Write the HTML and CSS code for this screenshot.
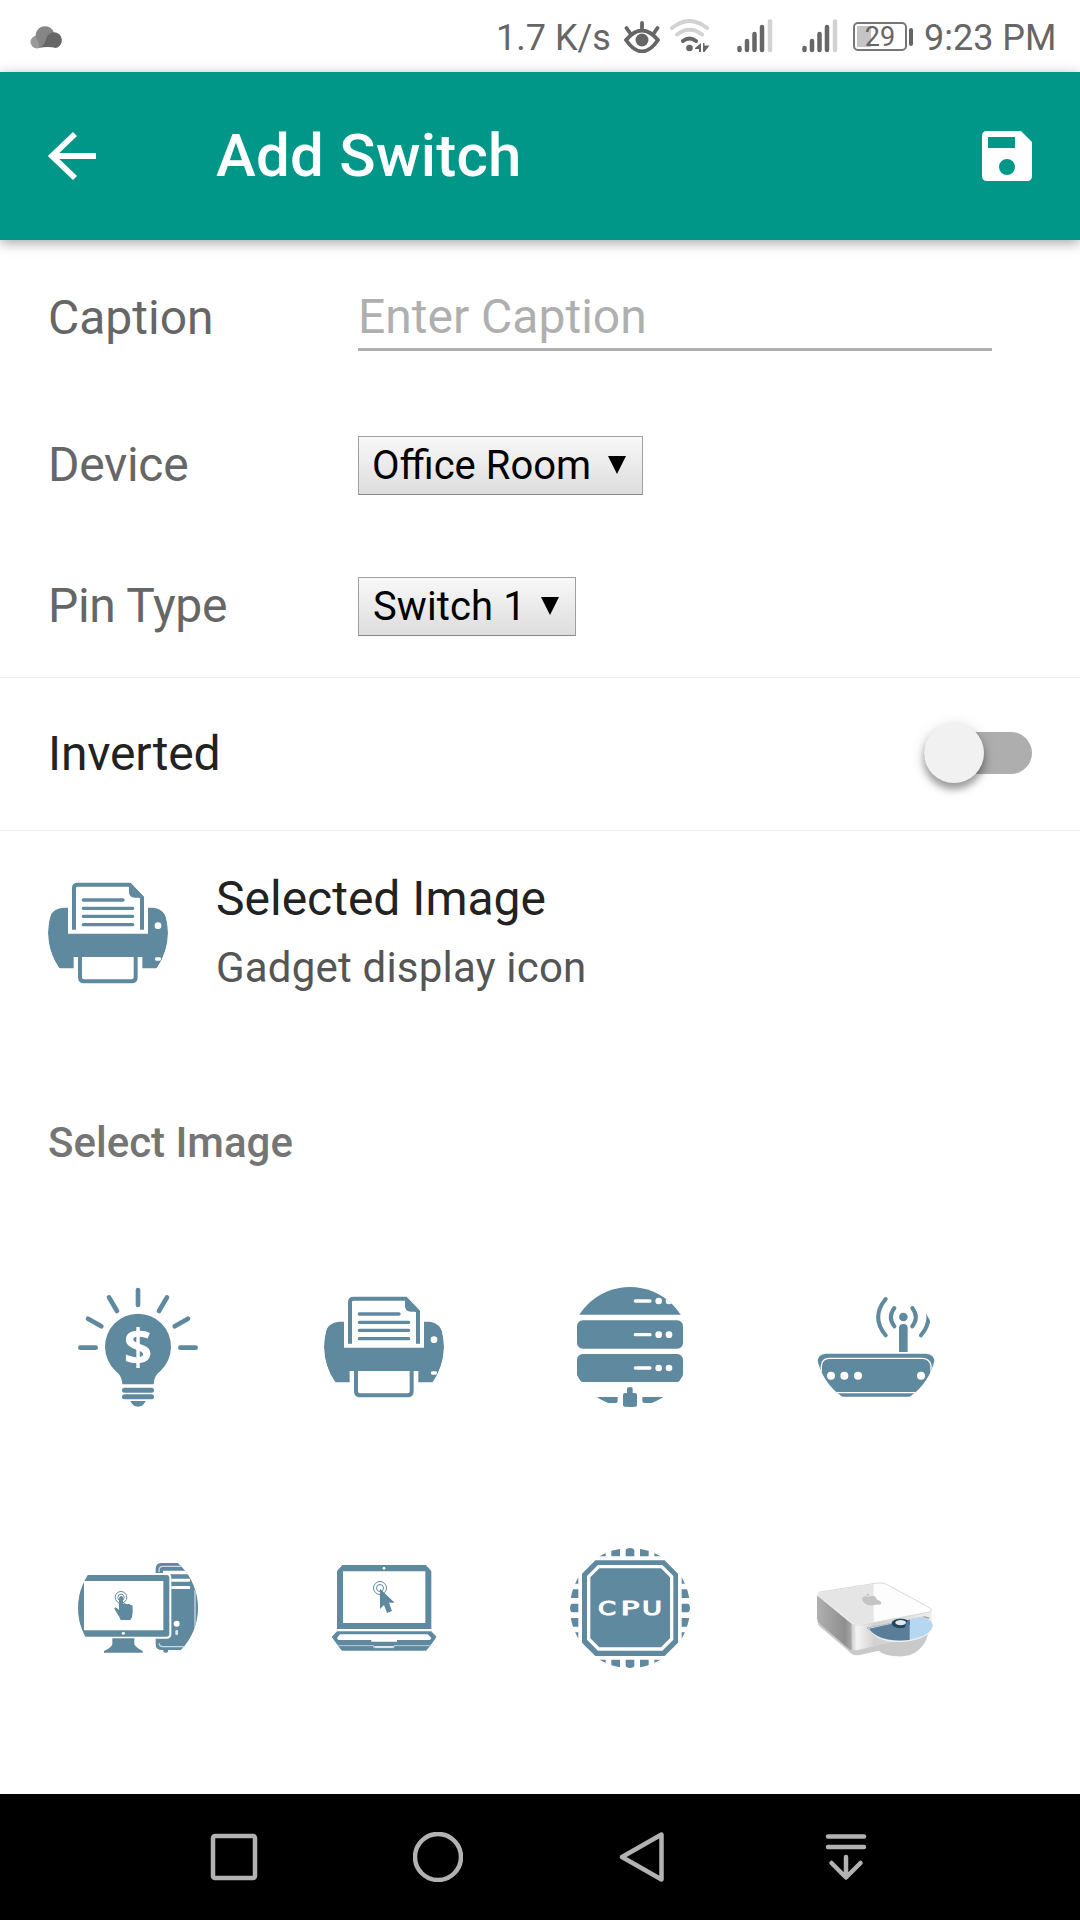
FILE: index.html
```html
<!DOCTYPE html>
<html lang="en">
<head>
<meta charset="utf-8">
<title>Add Switch</title>
<link rel="stylesheet" href="styles.css">
</head>
<body>
<svg class="defs" aria-hidden="true">
  <symbol id="printer" viewBox="42 51 360 360">
    <path d="M102 155V233H342V155H356C377 157 390 167 396 184Q416 262 369 337H325V303H119V337H75Q28 265 48 182C54 166 70 155 90 155Z"/>
    <path class="line12" d="M120 221V96Q120 86 131 86H287L324 125V221"/>
    <path d="M285 84V108Q285 125 303 125H328V122L290 82Z"/>
    <path class="line10" d="M148 132H267M148 157H296M148 181H296M148 206H296"/>
    <path class="line12" d="M138 300V364Q138 376 150 376H293Q305 376 305 364V300"/>
    <circle class="white" cx="372" cy="209" r="10"/>
    <rect class="white" x="363" y="304" width="18" height="10" rx="4"/>
  </symbol>
</svg>
<div class="screen">
  <div class="status">
    <svg class="cloud" viewBox="0 0 34 24"><circle cx="7" cy="17" r="6.5" fill="#999"/><path d="M6 13A9 9 0 0 1 24 8C19 8 17 13 15 17S12 22 9 22Q9 16 6 13Z" fill="#868686"/><path d="M9 23Q13 22 16 14A8 8 0 1 1 26 23Q18 21 9 23Z" fill="#666"/></svg>
    <span class="rate">1.7 K/s</span>
    <svg class="eye" viewBox="0 0 36 32"><path d="M2 19Q18 0 34 19Q18 42 2 19ZM18 9V2M6 12L2.500 7M30 12L33.500 7" fill="none" stroke="#666" stroke-width="3.8" stroke-linecap="round"/><circle cx="18" cy="19" r="6.5" fill="#666"/></svg>
    <svg class="wifi" viewBox="0 0 40 33"><g fill="none" stroke-width="4" stroke-linecap="round"><path d="M2 9Q19.500 -5 37 9M7 15.500Q19.500 6 32 15.500" stroke="#d2d2d2"/><path d="M13 22Q19.500 17 26 22" stroke="#666"/></g><g fill="#666"><circle cx="19.500" cy="29" r="3.300"/><path d="M25 29L31 24V33H29V30H25ZM33 24H34.500V26.500H39.500L34.500 33H33Z"/></g></svg>
    <svg class="signal" viewBox="0 0 36 34"><path d="M2.500 29V31M10 22V31M17.500 15V31M25 8V31" class="bars"/><path d="M33 2.500V31" class="bars faint"/></svg>
    <svg class="signal second" viewBox="0 0 36 34"><path d="M2.500 29V31M10 22V31M17.500 15V31M25 8V31" class="bars"/><path d="M33 2.500V31" class="bars faint"/></svg>
    <span class="battery">29</span><span class="nub"></span>
    <span class="time">9:23 PM</span>
  </div>

  <header class="appbar">
    <svg class="back" viewBox="0 0 48 50"><path d="M27 3L4 25L27 47M4 25H48" fill="none" stroke="#fff" stroke-width="5.800"/></svg>
    <h1 class="title">Add Switch</h1>
    <svg class="save" viewBox="0 0 50 50"><path fill="#fff" fill-rule="evenodd" d="M5 0H39L50 11V45Q50 50 45 50H5Q0 50 0 45V5Q0 0 5 0ZM6 6V17H33V6ZM25 28A8 8 0 1 0 25 44A8 8 0 1 0 25 28Z"/></svg>
  </header>

  <main class="content">
    <div class="row caption"><label class="label">Caption</label><div class="input">Enter Caption</div></div>
    <div class="row"><label class="label tight">Device</label><div class="select">Office Room<svg class="caret" viewBox="0 0 18 18"><path d="M0 0H18L9 18Z"/></svg></div></div>
    <div class="row"><label class="label tight">Pin Type</label><div class="select pin">Switch 1<svg class="caret" viewBox="0 0 18 18"><path d="M0 0H18L9 18Z"/></svg></div></div>
    <div class="row inverted"><span>Inverted</span><div class="toggle"><div class="thumb"></div></div></div>
    <div class="selected">
      <svg class="icon"><use href="#printer"/></svg>
      <div class="texts"><h2 class="name">Selected Image</h2><p class="note">Gadget display icon</p></div>
    </div>
    <h3 class="heading">Select Image</h3>
    <div class="gallery">
      <svg class="icon" viewBox="54 51 360 360">
        <path class="line14" d="M234 60V105M147 82L171 123M321 82L297 123M84 146L124 169M384 146L344 169M61 233H107M361 233H407"/>
        <path d="M187 343Q187 318 166 302A99 99 0 1 1 302 302Q281 318 281 343Z"/>
        <rect x="186" y="353" width="96" height="15" rx="7.500"/><rect x="186" y="373" width="96" height="15" rx="7.500"/>
        <path d="M211 393H257Q250 410 234 410T211 393Z"/>
        <text class="dollar" x="234" y="284">$</text>
      </svg>
      <svg class="icon"><use href="#printer"/></svg>
      <svg class="icon" viewBox="30 51 360 360">
        <path d="M51 51H369V134H51Z"/><rect x="51" y="151" width="318" height="85" rx="17"/><rect x="51" y="252" width="318" height="84" rx="17"/>
        <path d="M51 381H173V393Q173 399 167 399H51ZM369 381H247V393Q247 399 253 399H369ZM201 369V356Q201 351 210 351T218 356V369H225Q231 369 231 375V405Q231 411 225 411H196Q189 411 189 405V375Q189 369 195 369Z"/>
        <path class="line10 on-dark" d="M226 93H270M226 194H270M226 294H270"/>
        <g class="white"><circle cx="296" cy="93" r="10"/><circle cx="327" cy="93" r="10"/><circle cx="296" cy="194" r="10"/><circle cx="327" cy="194" r="10"/><circle cx="296" cy="294" r="10"/><circle cx="327" cy="294" r="10"/></g>
      </svg>
      <svg class="icon" viewBox="48 51 360 360">
        <path d="M52 380V275Q54 252 78 251H378Q402 253 404 275V380Z"/>
        <path d="M64 385V288Q66 265 88 265H368Q390 266 393 288V385M60 368H400" fill="none" stroke="#fff" stroke-width="4"/>
        <path class="line12" d="M257 87Q212 142 257 196M283 114Q262 142 283 169M337 114Q358 142 337 169M363 87Q408 142 363 196"/>
        <path class="white" d="M355 75H378V150L355 110Z"/>
        <circle cx="310" cy="141" r="13"/><path d="M297 246V174Q297 162 310 162T323 174V246Z"/>
        <g class="white"><circle cx="93" cy="317" r="12"/><circle cx="133" cy="317" r="12"/><circle cx="174" cy="317" r="12"/><circle cx="363" cy="317" r="12"/></g>
      </svg>
      <svg class="icon" viewBox="54 54 360 360">
        <path d="M303 99H414V360H305Q287 360 287 342V117Q287 99 303 99Z"/>
        <path d="M298 340Q298 350 308 350H385M297 127V122Q297 109 309 109H380M405 180V300" fill="none" stroke="#cbd9e1" stroke-width="4"/>
        <path d="M309 128V122H410V133H325ZM334 146H389Q393 151 389 155H334ZM334 168H389Q393 173 389 177H334Z" class="white"/>
        <rect x="310" y="356" width="14" height="12" rx="5"/><circle class="white" cx="350" cy="281" r="9"/><rect x="346" y="300" width="8" height="15" rx="3" fill="#dce6eb"/>
        <path d="M40 129H320Q334 129 334 143V311Q334 326 320 326H40Z" class="white"/>
        <path fill-rule="evenodd" d="M40 135H319Q328 135 328 144V311Q328 320 319 320H40ZM72 153V301H310V153Z"/>
        <circle class="white" cx="190" cy="310" r="4.500"/>
        <path d="M157 325H223V343Q227 352 248 363V368H132V363Q155 352 157 343Z"/>
        <g class="rings"><circle cx="183" cy="202" r="17.500"/><circle cx="183" cy="202" r="9.500"/></g>
        <path d="M177 207Q178 198 184 198T189 207V221Q195 218 201 223Q208 220 212 225Q218 224 218 230V247Q218 261 211 270H182Q178 258 170 248L163 236Q163 232 169 233L177 240Z"/>
      </svg>
      <svg class="icon" viewBox="792 54 360 360">
        <path fill-rule="evenodd" d="M847 105H1099L1114 122V297H831V122ZM849 124V279H1096V124Z"/><circle class="white" cx="972" cy="115" r="4"/>
        <path d="M831 304H1114L1130 321L1100 362H845L815 321Z"/>
        <path class="white" d="M840 313H1103L1114 324L1110 330H1011V335H934V330H835L831 324Z"/>
        <path d="M835 347H941V353H1002V347H1110" fill="none" stroke="#b9cdd6" stroke-width="3"/><path d="M942 348H1002L998 354H946Z" fill="#dce6eb"/>
        <g class="rings"><circle cx="960" cy="174" r="19.500"/><circle cx="960" cy="174" r="10.500"/></g>
        <path d="M960 176L1004 218H987L996 243L981 249L972 225L960 237Z"/>
      </svg>
      <svg class="icon" viewBox="30 54 360 360">
        <path d="M106 91H314L354 131V338L314 378H106L66 338V131Z"/>
        <path d="M116 110H305L335 140V327L305 357H116L86 327V140Z" fill="none" stroke="#fff" stroke-width="10"/>
        <g id="pins"><path d="M197 79V62Q197 54 210 54T223 62V79ZM154 79V54H180V79ZM240 79V54H266V79ZM110 79V54H137V79ZM283 79V54H310V79Z"/><path d="M197 389V406Q197 414 210 414T223 406V389ZM154 389V414H180V389ZM240 389V414H266V389ZM110 389V414H137V389ZM283 389V414H310V389Z"/></g>
        <use href="#pins" transform="rotate(90 210 234)"/>
        <text class="cpu" y="256"><tspan x="114" textLength="54" lengthAdjust="spacingAndGlyphs">C</tspan><tspan x="182" textLength="56" lengthAdjust="spacingAndGlyphs">P</tspan><tspan x="246" textLength="60" lengthAdjust="spacingAndGlyphs">U</tspan></text>
      </svg>
      <svg class="icon" viewBox="48 -36 360 360">
        <defs>
          <linearGradient id="side" x1="0" x2="1"><stop offset="0" stop-color="#b0b0b0"/><stop offset=".8" stop-color="#8e8e8e"/><stop offset="1" stop-color="#aaa"/></linearGradient>
          <linearGradient id="front" x1="0" x2="1"><stop offset="0" stop-color="#c9c9c9"/><stop offset=".07" stop-color="#f4f4f4"/><stop offset=".3" stop-color="#d0d0d0"/><stop offset="1" stop-color="#eee"/></linearGradient>
        </defs>
        <path d="M50 180L155 268L240 250L395 190L375 250Q345 289 310 289Q255 291 236 272L180 285Q165 287 155 281L53 194Z" fill="#c9c9c9"/>
        <path d="M51 106L156 190V270Q150 270 146 266L56 188Q51 183 51 175Z" fill="url(#side)"/>
        <path d="M154 194L395 152V205Q395 218 380 222L174 270Q157 274 155 260Z" fill="url(#front)"/>
        <path d="M60 96L232 69Q248 67 260 73L390 144Q400 151 388 156L190 194Q165 198 154 190L55 108Q48 100 60 96Z" fill="#fdfdfd" stroke="#d8d8d8" stroke-width="3"/>
        <path d="M60 97L221 72V187L190 192Q167 196 156 188L57 108Q51 100 60 97Z" fill="#e5e5e5"/>
        <path d="M200 203L375 169L390 173L378 184L215 220Z" fill="#a5a5a5"/>
        <path d="M204 205L365 171Q398 178 399 195C400 226 350 244 302 246C258 248 220 235 204 205Z" fill="#f2f2f2"/>
        <path d="M207 206L365 171Q397 180 398 194C397 222 350 240 300 242C255 243 222 230 207 206Z" fill="#b5d7f1"/>
        <path d="M207 206L329 179V240Q238 248 207 206Z" fill="#5c7d97"/>
        <ellipse cx="302" cy="190" rx="27" ry="14" fill="#1f4662"/><path d="M329 179V193Q326 203 313 204L323 181Z" fill="#517da0"/><ellipse cx="302" cy="188" rx="16" ry="8" fill="#e8e8e8"/>
        <path d="M187 121Q184 110 196 109Q205 112 213 108Q227 106 229 115Q229 120 240 122Q248 131 240 134Q230 133 219 136Q195 139 187 121ZM201 107Q194 101 207 101Q211 107 201 107Z" fill="#c4c4c4"/>
      </svg>
    </div>
  </main>

  <nav class="navbar">
    <svg class="key" viewBox="0 0 50 50"><rect x="4" y="4" width="42" height="42" rx="2"/></svg>
    <svg class="key" viewBox="0 0 50 50"><circle cx="25" cy="25" r="23"/></svg>
    <svg class="key" viewBox="0 0 50 50"><path d="M44.500 2.500V47.500L5 25Z"/></svg>
    <svg class="key" viewBox="0 0 50 50"><path d="M7 4.500H43M7 15H43M25 25V44M10.500 31L25 45.500L39.500 31"/></svg>
  </nav>
</div>
</body>
</html>
```
FILE: styles.css
```css
* { box-sizing: border-box; }
body { margin: 0; font-family: Roboto, sans-serif; background: #fff; }
h1, h2, h3, p { margin: 0; font-weight: 400; }
svg { display: block; flex: none; }
.defs { width: 0; height: 0; position: absolute; }
.screen { width: 1080px; height: 1920px; display: flex; flex-direction: column; background: #fff; overflow: hidden; }

.status { height: 72px; display: flex; align-items: flex-start; padding: 0 23px 0 30px; color: #666; font-size: 36px; line-height: 77px; white-space: nowrap; }
.cloud { width: 34px; height: 24px; margin-top: 25px; }
.rate { margin-left: auto; width: 128px; }
.eye { width: 36px; height: 32px; margin-top: 21px; }
.wifi { width: 40px; height: 33px; margin: 19px 0 0 10px; }
.signal { width: 36px; height: 34px; margin: 19px 0 0 27px; }
.signal.second { margin-left: 29px; }
.bars { stroke: #666; stroke-width: 4.500px; stroke-linecap: round; fill: none; }
.bars.faint { stroke: #d2d2d2; }
.battery { width: 54px; height: 29px; margin: 22px 0 0 15px; border: 2px solid #777; border-radius: 5px; background: linear-gradient(90deg, #c4c4c4 14px, transparent 14px) 2px 2px / 46px 21px no-repeat; font-size: 27px; line-height: 26px; text-align: center; }
.nub { width: 4px; height: 18px; margin: 28px 0 0 2px; border-radius: 2px; background: #666; }
.time { margin-left: 11px; width: 133px; }

.appbar { height: 168px; flex: none; display: flex; align-items: center; padding: 0 48px; background: #009688; box-shadow: 0 3px 12px rgba(0, 0, 0, .35); z-index: 1; }
.back { width: 48px; height: 50px; }
.title { margin-left: 120px; color: #fff; font-size: 60px; font-weight: 500; line-height: 70px; letter-spacing: .25px; }
.save { width: 50px; height: 50px; margin-left: auto; }

.content { flex: 1; font-size: 48px; }
.row { height: 141px; display: flex; align-items: center; padding: 0 48px; color: #666; }
.row.caption { height: 155px; padding-bottom: 3px; }
.label { width: 310px; padding-bottom: 3px; }
.caption .label { padding: 3px 0 0; }
.tight { letter-spacing: -.3px; }
.input { width: 634px; height: 70px; border-bottom: 3px solid #afafaf; color: #afafaf; line-height: 71px; }
.select { height: 59px; display: flex; align-items: center; padding: 0 16px 0 13px; border: 1px solid #a0a0a0; border-bottom-color: #888; background: linear-gradient(#f8f8f8, #ddd); color: #000; font-size: 40px; }
.select.pin { padding-left: 14px; letter-spacing: .1px; }
.caret { width: 18px; height: 18px; margin: 0 0 2px 17px; }
.pin .caret { margin-left: 15px; }
.row.inverted { height: 154px; border: solid #ececec; border-width: 1px 0; padding-bottom: 2px; justify-content: space-between; color: #222; letter-spacing: -.15px; }
.toggle { width: 108px; height: 42px; display: flex; align-items: center; border-radius: 21px; background: #aeaeae; }
.thumb { width: 60px; height: 60px; flex: none; border-radius: 50%; background: #f1f1f1; box-shadow: 0 6px 6px rgba(0, 0, 0, .16), 0 6px 9px rgba(0, 0, 0, .2), 0 3px 15px rgba(0, 0, 0, .15); }

.icon { width: 120px; height: 120px; border-radius: 50%; overflow: hidden; fill: #5f899e; }
.selected { display: flex; padding: 42px 48px 0; }
.texts { margin-left: 48px; }
.name { color: #222; font-size: 48px; line-height: 52px; }
.note { margin-top: 18px; color: #555; font-size: 42px; line-height: 50px; letter-spacing: .2px; }
.heading { margin-top: 125px; padding-left: 48px; height: 169px; color: #757575; font-size: 42px; font-weight: 500; line-height: 50px; }
.gallery { display: grid; grid-template-columns: repeat(4, 120px); gap: 141px 126px; padding-left: 78px; }
.white { fill: #fff; }
.line10, .line12, .line14 { fill: none; stroke: #5f899e; stroke-linecap: round; stroke-width: 10px; }
.line12 { stroke-width: 12px; }
.line14 { stroke-width: 14px; }
#printer .line12 { stroke-linecap: butt; }
.line10.on-dark { stroke: #fff; }
.rings { fill: none; stroke: #5f899e; stroke-width: 3px; }
.dollar { fill: #fff; font: 700 150px "Open Sans", sans-serif; text-anchor: middle; }
.cpu { fill: #fff; stroke: #fff; stroke-width: 3px; font: 400 58px "DejaVu Sans", sans-serif; }

.navbar { height: 126px; flex: none; display: flex; justify-content: space-between; align-items: center; padding: 0 209px; background: #000; }
.key { width: 50px; height: 50px; fill: none; stroke: #b2b2b2; stroke-width: 4.500px; stroke-linecap: round; stroke-linejoin: round; }
```
